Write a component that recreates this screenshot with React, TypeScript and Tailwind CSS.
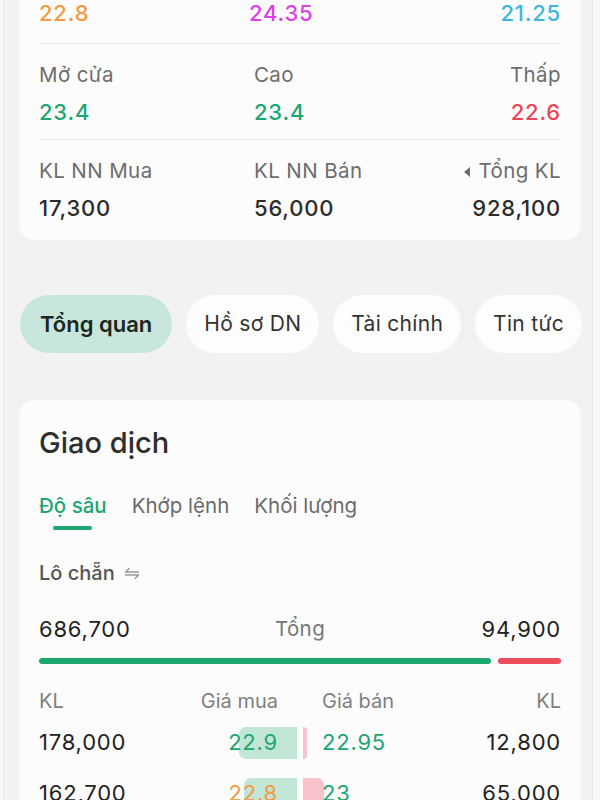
import React from 'react';

const TOP_ROWS = [
  [
    { label: 'Tham chiếu', value: '22.8', color: 'text-[#f39b45]' },
    { label: 'Trần', value: '24.35', color: 'text-[#df3fe6]', shift: true },
    { label: 'Sàn', value: '21.25', color: 'text-[#3bb6e0]' },
  ],
  [
    { label: 'Mở cửa', value: '23.4', color: 'text-[#1ba672]' },
    { label: 'Cao', value: '23.4', color: 'text-[#1ba672]' },
    { label: 'Thấp', value: '22.6', color: 'text-[#e8465a]' },
  ],
  [
    { label: 'KL NN Mua', value: '17,300', color: 'text-[#2b2b2b]' },
    { label: 'KL NN Bán', value: '56,000', color: 'text-[#2b2b2b]' },
    { label: 'Tổng KL', value: '928,100', color: 'text-[#2b2b2b]', arrow: true },
  ],
];

const ROW_PAD = ['pt-[18px] pb-[16px] border-b', 'pt-[17px] pb-[13px] border-b', 'pt-[17px] pb-[18px]'];

const PILLS = ['Tổng quan', 'Hồ sơ DN', 'Tài chính', 'Tin tức'];

const BOOK = [
  { buyVol: '178,000', buy: 178000, buyPrice: '22.9', buyColor: 'text-[#1ba672]', sellPrice: '22.95', sellColor: 'text-[#1ba672]', sell: 12800, sellVol: '12,800' },
  { buyVol: '162,700', buy: 162700, buyPrice: '22.8', buyColor: 'text-[#f39b45]', sellPrice: '23', sellColor: 'text-[#1ba672]', sell: 65000, sellVol: '65,000' },
];

const barWidth = (v: number) => Math.max(3, Math.round((v / 178000) * 58));

export default function App() {
  const totalBuy = 686700;
  const totalSell = 94900;

  return (
    <div className="w-[600px] h-[800px] overflow-hidden bg-[#f8f8f8] font-['Inter',sans-serif]">
      <div className="ml-[3px] w-[590px] h-full overflow-hidden border-x border-[#e7e7e7] bg-[#f2f2f2]">
        {/* price summary card */}
        <div className="ml-[15px] mt-[-56px] w-[562px] rounded-[16px] bg-[#fcfcfc] px-5">
          {TOP_ROWS.map((row, i) => (
            <div key={i} className={`grid grid-cols-[215px_1fr_auto] border-[#e9e9e9] ${ROW_PAD[i]}`}>
              {row.map((s, j) => (
                <div key={s.label} className={`${j === 2 ? 'text-right' : ''} ${'shift' in s && s.shift ? '-ml-[5px]' : ''}`}>
                  <div
                    className={`flex items-center gap-[7px] text-[20.5px] leading-[28px] tracking-[0.4px] text-[#6d6d6d] ${
                      j === 2 ? 'justify-end' : 'justify-start'
                    }`}
                  >
                    {'arrow' in s && s.arrow && (
                      <svg width="8" height="12" viewBox="0 0 8 12" className="mt-[1px]">
                        <path d="M7 1 L1 6 L7 11 Z" fill="#6d6d6d" />
                      </svg>
                    )}
                    {s.label}
                  </div>
                  <div className={`mt-[9px] text-[22px] leading-[28px] tracking-[0.8px] font-medium ${s.color}`}>
                    {s.value}
                  </div>
                </div>
              ))}
            </div>
          ))}
        </div>

        {/* section tabs */}
        <div className="mt-[55px] flex gap-[14px] pl-[16px]">
          {PILLS.map((p, i) => (
            <div
              key={p}
              className={`shrink-0 h-[58px] flex items-center rounded-full ${
                i === 0
                  ? 'px-5 bg-[#c8e6db] text-[22px] font-semibold text-[#1d2621]'
                  : 'px-[18px] bg-[#fdfdfd] text-[21px] tracking-[0.3px] text-[#333]'
              }`}
            >
              {p}
            </div>
          ))}
        </div>

        {/* trading card */}
        <div className="ml-[15px] mt-[47px] w-[562px] rounded-[16px] bg-[#fcfcfc] px-5 pt-[26px] pb-6">
          <div className="text-[29px] leading-[34px] font-medium text-[#2e2e2e]">Giao dịch</div>

          <div className="mt-[32px] flex gap-[25px] text-[20.5px] leading-[28px]">
            <div className="flex flex-col items-center">
              <span className="text-[#1ea772] font-medium">Độ sâu</span>
              <span className="mt-[6px] h-[4px] w-[39px] rounded-full bg-[#1ea772]" />
            </div>
            <span className="text-[#6b6b6b]">Khớp lệnh</span>
            <span className="text-[#6b6b6b]">Khối lượng</span>
          </div>

          <div className="mt-[29px] flex items-center gap-[9px] text-[20px] leading-[28px] font-medium text-[#555]">
            Lô chẵn
            <svg width="16" height="13" viewBox="0 0 16 13" fill="none" stroke="#9a9a9a" strokeWidth="1.4" strokeLinecap="round" strokeLinejoin="round">
              <path d="M5 1.5 L1.5 5 H14.5" />
              <path d="M1.5 8 H14.5 L11 11.5" />
            </svg>
          </div>

          <div className="mt-[28px] grid grid-cols-3 items-center text-[22px] leading-[28px] tracking-[0.8px]">
            <span className="text-[#222]">686,700</span>
            <span className="text-center text-[20.5px] tracking-[0.4px] text-[#777]">Tổng</span>
            <span className="text-right text-[#222]">94,900</span>
          </div>

          <div className="mt-[15px] flex gap-[7px]">
            <div className="h-[6px] rounded-full bg-[#19a86e]" style={{ flexGrow: totalBuy, flexBasis: 0 }} />
            <div className="h-[6px] rounded-full bg-[#ee4b5b]" style={{ flexGrow: totalSell, flexBasis: 0 }} />
          </div>

          <div className="mt-[23px] grid grid-cols-2 gap-[6px] text-[20px] leading-[28px] text-[#808080]">
            <div className="flex justify-between pr-[19px]">
              <span>KL</span>
              <span>Giá mua</span>
            </div>
            <div className="flex justify-between pl-[19px]">
              <span>Giá bán</span>
              <span>KL</span>
            </div>
          </div>

          <div className="mt-[2px]">
            {BOOK.map((r) => (
              <div key={r.buyVol} className="grid h-[51px] grid-cols-2 items-center gap-[6px] text-[22px] tracking-[0.8px]">
                <div className="relative flex h-[32px] items-center justify-between pr-[19px]">
                  <span className="text-[#222]">{r.buyVol}</span>
                  <div
                    className="absolute right-0 top-0 h-full rounded-l-[7px] bg-[#c2e6d6]"
                    style={{ width: barWidth(r.buy) }}
                  />
                  <span className={`relative ${r.buyColor}`}>{r.buyPrice}</span>
                </div>
                <div className="relative flex h-[32px] items-center justify-between pl-[19px]">
                  <div
                    className="absolute left-0 top-0 h-full rounded-r-[7px] bg-[#f8c3cb]"
                    style={{ width: barWidth(r.sell) }}
                  />
                  <span className={`relative ${r.sellColor}`}>{r.sellPrice}</span>
                  <span className="text-[#222]">{r.sellVol}</span>
                </div>
              </div>
            ))}
          </div>
        </div>
      </div>
    </div>
  );
}
